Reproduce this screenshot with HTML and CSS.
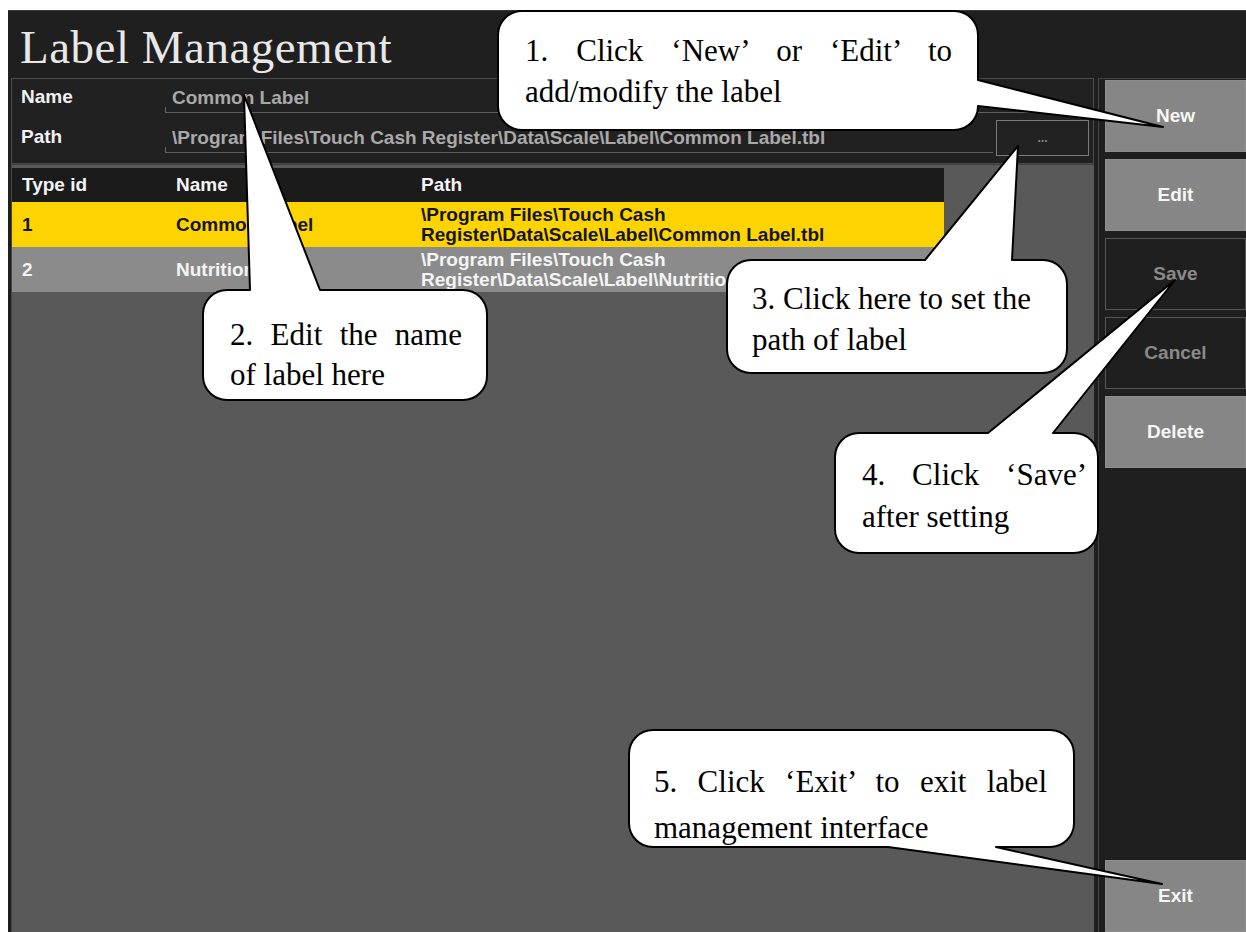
FILE: index.html
```html
<!DOCTYPE html>
<html lang="en">
  <head>
    <meta charset="UTF-8" />
    <title>Label Management</title>
    <link rel="stylesheet" href="styles.css">
  </head>
  <body>
    <div class="window">
      <div class="titlebar">
        <h1>Label Management</h1>
      </div>

      <div class="main">
        <div class="left">
          <div class="form">
            <div class="form-row">
              <span class="lbl">Name</span>
              <div class="field">Common Label</div>
            </div>
            <div class="form-row">
              <span class="lbl">Path</span>
              <div class="field">\Program Files\Touch Cash Register\Data\Scale\Label\Common Label.tbl</div>
              <button class="browse">...</button>
            </div>
          </div>

          <div class="list">
            <table>
              <thead>
                <tr>
                  <th class="c-id">Type id</th>
                  <th class="c-name">Name</th>
                  <th class="c-path">Path</th>
                </tr>
              </thead>
              <tbody>
                <tr class="selected">
                  <td>1</td>
                  <td>Common Label</td>
                  <td>\Program Files\Touch Cash Register\Data\Scale\Label\Common Label.tbl</td>
                </tr>
                <tr>
                  <td>2</td>
                  <td>Nutrition Label</td>
                  <td>\Program Files\Touch Cash Register\Data\Scale\Label\Nutrition Label.tbl</td>
                </tr>
              </tbody>
            </table>
          </div>
        </div>

        <div class="side">
          <button class="btn">New</button>
          <button class="btn">Edit</button>
          <button class="btn dim">Save</button>
          <button class="btn dim">Cancel</button>
          <button class="btn">Delete</button>
          <button class="btn exit">Exit</button>
        </div>
      </div>
    </div>

    <!-- callout bubbles drawn over the screen -->
    <svg class="callouts" width="1246" height="932" viewBox="0 0 1246 932">
      <path d="M 522 11 H 954 A 24 24 0 0 1 978 35 V 80 L 1163 127 L 978 106 A 24 24 0 0 1 954 130 H 522 A 24 24 0 0 1 498 106 V 35 A 24 24 0 0 1 522 11 Z" />
      <path d="M 227 290 H 250 L 244 95 L 320 290 H 463 A 24 24 0 0 1 487 314 V 376 A 24 24 0 0 1 463 400 H 227 A 24 24 0 0 1 203 376 V 314 A 24 24 0 0 1 227 290 Z" />
      <path d="M 751 260 H 925 L 1018 146 L 1012 260 H 1043 A 24 24 0 0 1 1067 284 V 349 A 24 24 0 0 1 1043 373 H 751 A 24 24 0 0 1 727 349 V 284 A 24 24 0 0 1 751 260 Z" />
      <path d="M 859 433 H 988 L 1175 280 L 1053 433 H 1074 A 24 24 0 0 1 1098 457 V 529 A 24 24 0 0 1 1074 553 H 859 A 24 24 0 0 1 835 529 V 457 A 24 24 0 0 1 859 433 Z" />
      <path d="M 653 730 H 1050 A 24 24 0 0 1 1074 754 V 823 A 24 24 0 0 1 1050 847 H 996 L 1162 884 L 888 847 H 653 A 24 24 0 0 1 629 823 V 754 A 24 24 0 0 1 653 730 Z" />
    </svg>

    <div class="note note-1">
      <div class="full">1. Click ‘New’ or ‘Edit’ to</div>
      <div>add/modify the label</div>
    </div>
    <div class="note note-2">
      <div class="full">2. Edit the name</div>
      <div>of label here</div>
    </div>
    <div class="note note-3">
      <div>3. Click here to set the</div>
      <div>path of label</div>
    </div>
    <div class="note note-4">
      <div class="full">4. Click ‘Save’</div>
      <div>after setting</div>
    </div>
    <div class="note note-5">
      <div class="full">5. Click ‘Exit’ to exit label</div>
      <div>management interface</div>
    </div>
  </body>
</html>
```

FILE: styles.css
```css
body {
  margin: 0;
  background: #ffffff;
  font-family: "Liberation Sans", Arial, sans-serif;
  position: relative;
  width: 1246px;
  height: 932px;
  overflow: hidden;
}

.window {
  margin: 10px 0 0 8px;
  height: 922px;
  background: #1f1f1f;
  border-top: 1px solid #3a3a3a;
  box-sizing: border-box;
  display: flex;
  flex-direction: column;
}

.titlebar {
  height: 67px;
  flex: none;
  padding: 8px 0 0 12px;
  box-sizing: border-box;
}

.titlebar h1 {
  margin: 0;
  font-family: "Liberation Serif", "Times New Roman", serif;
  font-weight: normal;
  font-size: 47px;
  line-height: 56px;
  letter-spacing: 0.5px;
  color: #e8e8e8;
}

.main {
  flex: 1;
  display: flex;
  min-height: 0;
}

.left {
  width: 1083px;
  margin-left: 3px;
  display: flex;
  flex-direction: column;
}

/* name / path form */
.form {
  height: 86px;
  flex: none;
  box-sizing: border-box;
  border: 1px solid #4b4b4b;
  background: #212121;
  padding: 5px 4px 0 9px;
}

.form-row {
  display: flex;
  align-items: flex-start;
  height: 29px;
  margin-bottom: 11px;
}

.lbl {
  width: 144px;
  flex: none;
  font-size: 19px;
  font-weight: bold;
  line-height: 26px;
  color: #f2f2f2;
}

.field {
  flex: 1;
  position: relative;
  height: 29px;
  box-sizing: border-box;
  border-bottom: 1px solid #5e5e5e;
  padding-left: 7px;
  font-size: 19px;
  font-weight: bold;
  line-height: 28px;
  color: #a9a9a9;
  white-space: nowrap;
  overflow: hidden;
}

.field::before {
  content: "";
  position: absolute;
  left: 0;
  bottom: 0;
  width: 1px;
  height: 5px;
  background: #5e5e5e;
}

.browse {
  width: 93px;
  height: 36px;
  margin: -4px 0 0 3px;
  flex: none;
  background: #222222;
  border: 1px solid #7a7a7a;
  color: #8c8c8c;
  font-family: "Liberation Sans", Arial, sans-serif;
  font-size: 12px;
  font-weight: bold;
  padding: 0;
}

/* label list */
.list {
  flex: 1;
  background: #595959;
  border-top: 1px solid #3c3c3c;
  border-left: 1px solid #444444;
  padding-top: 3px;
}

table {
  width: 932px;
  border-collapse: collapse;
  font-size: 19px;
  font-weight: bold;
}

th,
td {
  text-align: left;
  padding: 0 0 0 10px;
  vertical-align: middle;
}

th {
  height: 34px;
  background: #1b1b1b;
  color: #f4f4f4;
}

.c-id {
  width: 144px;
}

.c-name {
  width: 235px;
}

td {
  height: 45px;
  line-height: 20px;
  background: #8b8b8b;
  color: #f4f4f4;
}

tr.selected td {
  background: #fdd400;
  color: #141414;
}

/* command buttons */
.side {
  flex: 1;
  margin-left: 4px;
  border-left: 1px solid #454545;
  border-top: 1px solid #454545;
  padding: 1px 0 0 6px;
  display: flex;
  flex-direction: column;
}

.btn {
  height: 72px;
  flex: none;
  margin-bottom: 7px;
  border: 1px solid #8f8f8f;
  background: #868686;
  color: #f6f6f6;
  font-family: "Liberation Sans", Arial, sans-serif;
  font-size: 19px;
  font-weight: bold;
  padding: 0;
}

.btn.dim {
  background: #1f1f1f;
  border-color: #555555;
  color: #8a8a8a;
}

.btn.exit {
  margin-top: auto;
  margin-bottom: 0;
}

/* callouts */
.callouts {
  position: absolute;
  top: 0;
  left: 0;
}

.callouts path {
  fill: #ffffff;
  stroke: #000000;
  stroke-width: 2;
  stroke-linejoin: round;
}

.note {
  position: absolute;
  box-sizing: border-box;
  font-family: "Liberation Serif", "Times New Roman", serif;
  font-size: 31px;
  line-height: 40px;
  color: #000000;
}

.note .full {
  text-align: justify;
  text-align-last: justify;
}

.note-1 {
  left: 498px;
  top: 11px;
  width: 480px;
  padding: 19px 26px 0 27px;
  line-height: 41px;
}

.note-2 {
  left: 203px;
  top: 290px;
  width: 284px;
  padding: 25px 25px 0 27px;
}

.note-3 {
  left: 727px;
  top: 260px;
  width: 340px;
  padding: 18px 20px 0 25px;
  line-height: 41px;
}

.note-4 {
  left: 835px;
  top: 433px;
  width: 263px;
  padding: 21px 11px 0 27px;
  line-height: 42px;
}

.note-5 {
  left: 629px;
  top: 730px;
  width: 445px;
  padding: 29px 27px 0 25px;
  line-height: 46px;
}
```
